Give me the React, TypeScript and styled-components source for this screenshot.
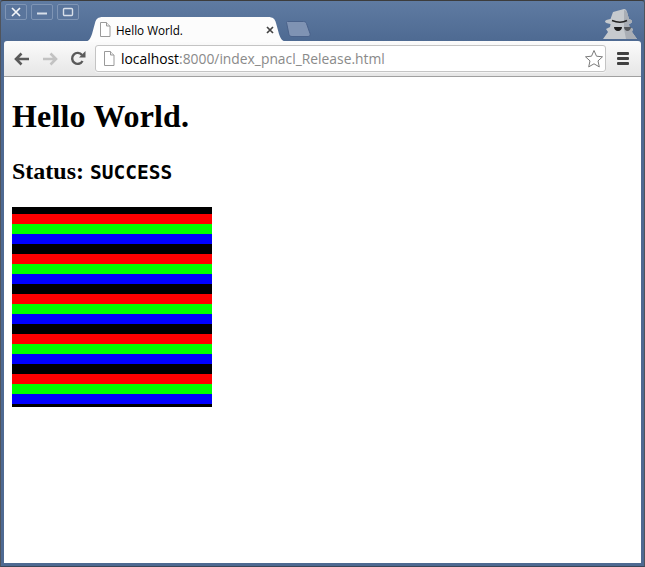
import React from 'react';
import styled, { createGlobalStyle } from 'styled-components';

const GlobalStyle = createGlobalStyle`
  html, body {
    margin: 0;
    padding: 0;
    background: #4f6a91;
  }
`;

const Frame = styled.div`
  box-sizing: border-box;
  width: 645px;
  height: 567px;
  display: flex;
  flex-direction: column;
  overflow: hidden;
  padding: 0 3px 3px;
  border: 1px solid #50545c;
  border-top-color: #3c3c3c;
  border-bottom-color: #3a4658;
  border-radius: 3px 3px 0 0;
  background: linear-gradient(#5f7ba2 0, #4e6a92 40px, #4e6a92 100%);
`;

const TitleBar = styled.div`
  height: 40px;
  flex: none;
  display: flex;
  align-items: flex-start;
  position: relative;
`;

const WindowButtons = styled.div`
  display: flex;
  gap: 4px;
  padding: 3px 0 0 1px;
`;

const WindowButton = styled.div`
  box-sizing: border-box;
  width: 22px;
  height: 16px;
  border: 1px solid #7f95b5;
  border-radius: 2px;
  background: #5a759c;
  display: flex;
  align-items: center;
  justify-content: center;
`;

const Tab = styled.div`
  position: absolute;
  left: 79px;
  top: 16px;
  width: 206px;
  height: 25px;
  display: flex;
  align-items: center;
  color: #000;
  font: 11.7px "Open Sans", "DejaVu Sans", sans-serif;
`;

const TabShape = styled.svg`
  position: absolute;
  inset: 0;
`;

const TabIcon = styled.svg`
  position: relative;
  margin-left: 16px;
  flex: none;
`;

const TabTitle = styled.span`
  position: relative;
  margin-left: 5px;
  flex: 1;
  white-space: nowrap;
`;

const TabClose = styled.svg`
  position: relative;
  margin-right: 15px;
  flex: none;
`;

const NewTab = styled.svg`
  position: absolute;
  left: 282px;
  top: 20px;
`;

const Incognito = styled.svg`
  position: absolute;
  right: 3px;
  top: 8px;
`;

const Toolbar = styled.div`
  box-sizing: border-box;
  height: 36px;
  flex: none;
  display: flex;
  align-items: center;
  padding: 0 12px 0 10px;
  border-radius: 3px 3px 0 0;
  border-bottom: 1px solid #a0a0a0;
  background: linear-gradient(#fbfbfb, #e6e6e6);
`;

const NavIcon = styled.svg`
  flex: none;
  margin-right: 12px;
`;

const Omnibox = styled.div`
  box-sizing: border-box;
  flex: 1;
  height: 27px;
  margin-left: -3px;
  display: flex;
  align-items: center;
  padding: 0 1px 0 7px;
  border: 1px solid #c4c4c4;
  border-radius: 3px;
  background: #fff;
  box-shadow: 0 1px 0 #f4f4f4;
  font: 13.85px "Open Sans", "DejaVu Sans", sans-serif;
  color: #000;
`;

const Url = styled.span`
  flex: 1;
  margin-left: 6px;
  white-space: nowrap;
`;

const UrlRest = styled.span`
  color: #8a8a8a;
`;

const Menu = styled.div`
  flex: none;
  width: 12px;
  margin-left: 11px;
  display: flex;
  flex-direction: column;
  gap: 2px;
`;

const MenuBar = styled.div`
  height: 3px;
  border-radius: 1px;
  background: #404040;
`;

const Page = styled.main`
  flex: 1;
  background: #fff;
  padding: 0 8px;
  color: #000;
  font-family: "Liberation Serif", serif;
`;

const Heading = styled.h1`
  font-size: 32px;
  letter-spacing: 0.15px;
  margin: 21px 0 23px;
  line-height: 37px;
`;

const Status = styled.h2`
  font-size: 24px;
  margin: 0;
  line-height: 27px;
`;

const StatusCode = styled.code`
  font-family: "DejaVu Sans Mono", monospace;
  font-size: 19.5px;
`;

const Canvas = styled.div`
  width: 200px;
  height: 200px;
  margin-top: 21px;
  overflow: hidden;
  background: repeating-linear-gradient(
    #000 0 10px,
    #f00 10px 20px,
    #0f0 20px 30px,
    #00f 30px 40px
  ) 0 -3px / 200px 203px;
`;

const App: React.FC = () => {
  return (
    <>
      <GlobalStyle />
      <Frame>
        <TitleBar>
          <WindowButtons>
            <WindowButton>
              <svg width="10" height="10" viewBox="0 0 10 10">
                <path d="M1 1l8 8M9 1l-8 8" stroke="#f4f6f9" strokeWidth="1.7" />
              </svg>
            </WindowButton>
            <WindowButton>
              <svg width="10" height="10" viewBox="0 0 10 10">
                <path d="M0 6.500h10" stroke="#d8dfe9" strokeWidth="2" />
              </svg>
            </WindowButton>
            <WindowButton>
              <svg width="12" height="10" viewBox="0 0 12 10">
                <rect x="1.500" y="1.500" width="9" height="7" rx="1" fill="none" stroke="#d8dfe9" strokeWidth="1.400" />
              </svg>
            </WindowButton>
          </WindowButtons>
          <Tab>
            <TabShape width="206" height="25" viewBox="0 0 206 25">
              <path d="M0 25c5 0 7-2 9-8l3-11c1-4 3-6 8-6h165c5 0 7 2 8 6l3 11c2 6 4 8 10 8z" fill="#fcfcfc" />
            </TabShape>
            <TabIcon width="12" height="15" viewBox="0 0 12 15">
              <path d="M1.500.5h6l3.500 3.500v10.500h-9.500z" fill="#fff" stroke="#9a9a9a" />
              <path d="M7.500.5v3.500h3.500" fill="#eee" stroke="#9a9a9a" />
            </TabIcon>
            <TabTitle>Hello World.</TabTitle>
            <TabClose width="8" height="8" viewBox="0 0 8 8">
              <path d="M1 1l6 6M7 1l-6 6" stroke="#444" strokeWidth="1.700" />
            </TabClose>
          </Tab>
          <NewTab width="26" height="16" viewBox="0 0 26 16">
            <path d="M.5 1.500c0-.7.4-1 1-1h16c1.500 0 2.500.7 3 2l3.500 10c.4 1.500 0 3-2 3h-16c-1.500 0-2.500-.7-3-2z" fill="#7f93b3" stroke="#4a628a" />
          </NewTab>
          <Incognito width="36" height="32" viewBox="0 0 36 32">
            <path d="M11 3l11-3c1.500 0 2.500 1 3 3l2 7c2 .5 3 1.500 3 2.500 0 1-1 2-3 2.500l.5 3 3.500 2-1 3 5 7H1l5-7-2-3 4-2 .5-3C5 14.500 3 13.500 3 12.500c0-1 2-2 5.500-2.500z" fill="#c6cace" />
            <path d="M22 1c1.500 0 2.500 1 3 2l2 7c2 .5 3 1.500 3 2.500 0 1-1 2-3 2.500l.5 3 3.500 2-1 3 5 7H24l-2-10z" fill="#a9aeb5" />
            <path d="M10 11.500c5 2 11 2 15 0" fill="none" stroke="#222" strokeWidth="1.500" />
            <path d="M12 18h8c0 2-1.500 4-4 4-2.500 0-4-2-4-4z" fill="#1d1d1d" />
            <path d="M22 18h7c0 2-1.500 4-3.500 4-2 0-3.500-2-3.500-4z" fill="#55585c" />
          </Incognito>
        </TitleBar>
        <Toolbar>
          <NavIcon width="16" height="14" viewBox="0 0 16 14">
            <path d="M7.500 1.500L2 7l5.500 5.500M2.500 7H15" fill="none" stroke="#5a5a5a" strokeWidth="2.600" />
          </NavIcon>
          <NavIcon width="16" height="14" viewBox="0 0 16 14">
            <path d="M8.500 1.500L14 7l-5.500 5.500M13.500 7H1" fill="none" stroke="#c2c2c2" strokeWidth="2.600" />
          </NavIcon>
          <NavIcon width="16" height="15" viewBox="0 0 16 15">
            <path d="M12.500 10A5.500 5.500 0 1 1 12 4" fill="none" stroke="#5a5a5a" strokeWidth="2.400" />
            <path d="M9 6.500h6.500V0z" fill="#5a5a5a" />
          </NavIcon>
          <Omnibox>
            <svg width="12" height="15" viewBox="0 0 12 15">
              <path d="M1.500.5h6l3.500 3.500v10.500h-9.500z" fill="#fff" stroke="#9a9a9a" />
              <path d="M7.500.5v3.500h3.500" fill="#eee" stroke="#9a9a9a" />
            </svg>
            <Url>
              localhost<UrlRest>:8000/index_pnacl_Release.html</UrlRest>
            </Url>
            <svg width="20" height="19" viewBox="0 0 20 19">
              <path d="M10 1.500l2.500 5.700 6 .6-4.500 4.100 1.300 6L10 14.800l-5.300 3.100 1.300-6-4.500-4.100 6-.6z" fill="#fff" stroke="#7a7a7a" />
            </svg>
          </Omnibox>
          <Menu>
            <MenuBar />
            <MenuBar />
            <MenuBar />
          </Menu>
        </Toolbar>
        <Page>
          <Heading>Hello World.</Heading>
          <Status>
            Status: <StatusCode>SUCCESS</StatusCode>
          </Status>
          <Canvas />
        </Page>
      </Frame>
    </>
  );
};

export default App;
